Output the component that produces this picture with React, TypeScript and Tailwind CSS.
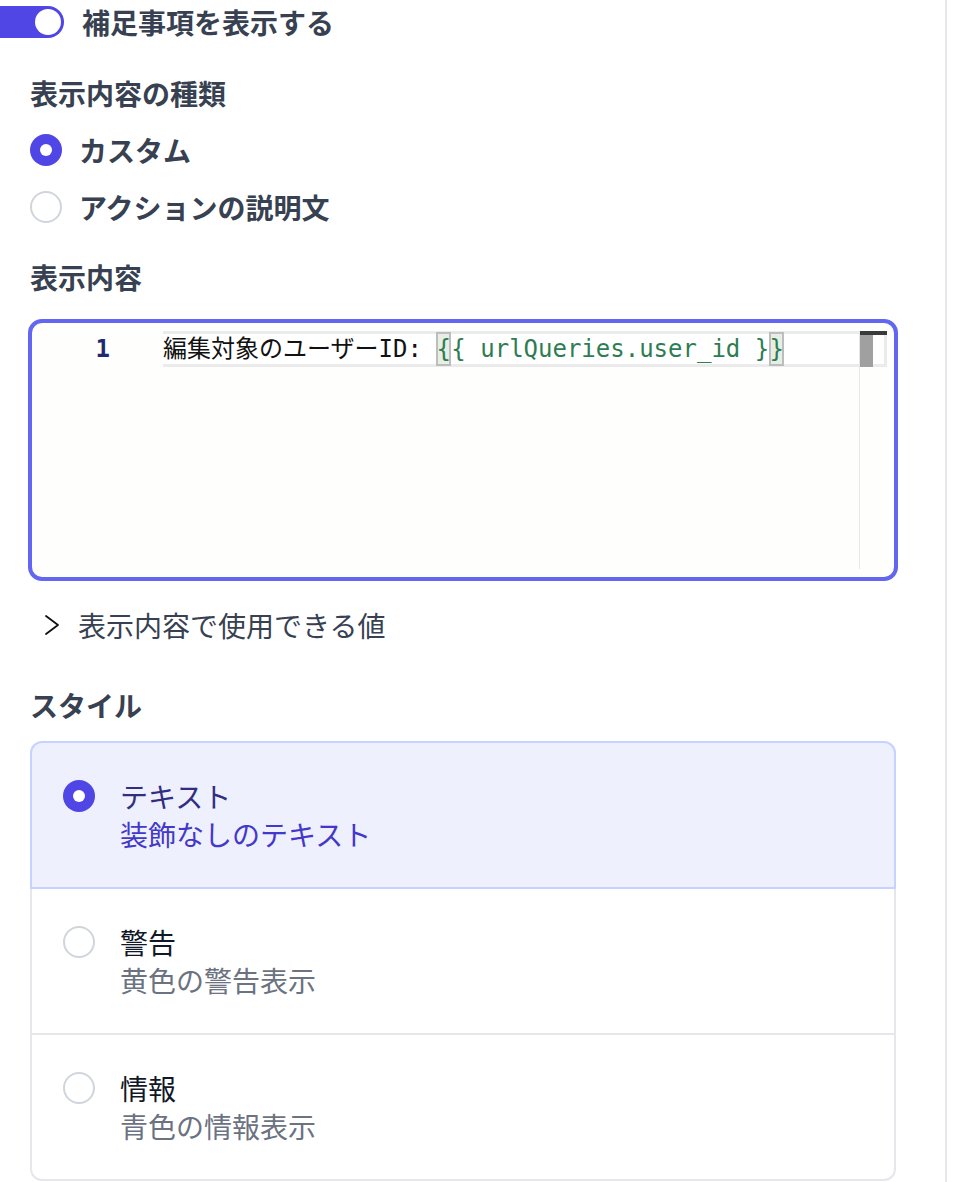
import { useState } from "react";

const styleOptions = [
  { id: "text", label: "テキスト", description: "装飾なしのテキスト" },
  { id: "warning", label: "警告", description: "黄色の警告表示" },
  { id: "info", label: "情報", description: "青色の情報表示" },
];

const contentKinds = [
  { id: "custom", label: "カスタム" },
  { id: "action", label: "アクションの説明文" },
];

function Radio({ checked }: { checked: boolean }) {
  if (checked) {
    return (
      <span className="flex h-[32px] w-[32px] shrink-0 items-center justify-center rounded-full bg-[#4f46e5]">
        <span className="h-[12px] w-[12px] rounded-full bg-white" />
      </span>
    );
  }

  return (
    <span className="h-[32px] w-[32px] shrink-0 rounded-full border-2 border-[#d1d5db] bg-white" />
  );
}

function Editor() {
  return (
    <div className="relative -mx-[2px] mt-[22px] h-[262px] rounded-[14px] border-4 border-[#6366f1] bg-[#fefefc]">
      <div className="flex pt-[8px]">
        <div className="w-[131px] shrink-0 pr-[53px] text-right font-['DejaVu_Sans_Mono',monospace] text-[24px] leading-[36px] font-bold text-[#1f2a6e]">
          1
        </div>
        <div className="mr-[7px] flex h-[36px] flex-1 items-center border-[3px] border-l-0 border-[#ebebeb] bg-white font-['DejaVu_Sans_Mono','Noto_Sans_CJK_JP',monospace] text-[24px] whitespace-pre text-[#111]">
          <span>編集対象のユーザーID: </span>
          <span className="inline-flex h-[34px] w-[15px] items-center justify-center border-2 border-[#bdbdbd] bg-[#e7eee5] text-[#2e7d52]">
            {"{"}
          </span>
          <span className="text-[#2e7d52]">{"{ urlQueries.user_id }"}</span>
          <span className="inline-flex h-[34px] w-[15px] items-center justify-center border-2 border-[#bdbdbd] bg-[#e7eee5] text-[#2e7d52]">
            {"}"}
          </span>
        </div>
      </div>
      {/* scrollbar overlay */}
      <div className="absolute top-[8px] right-[7px] bottom-[8px] w-[28px] border-l border-[#e6e6e6]">
        <div className="h-[4px] w-full bg-[#3a3a3a]" />
        <div className="h-[32px] w-[13px] bg-[#a0a0a0]" />
      </div>
    </div>
  );
}

export default function App() {
  const [enabled, setEnabled] = useState(true);
  const [kind, setKind] = useState("custom");
  const [style, setStyle] = useState("text");

  return (
    <div className="flex min-h-[1182px] w-[953px] bg-white font-['Noto_Sans_CJK_JP','Noto_Sans',sans-serif] text-[#374151]">
      <div className="w-[947px] shrink-0 overflow-hidden border-r-2 border-[#e5e7eb] pt-[6px] pr-[49px] pl-[30px]">
        <div className="flex items-center">
          <button
            type="button"
            onClick={() => setEnabled((v) => !v)}
            className="-ml-[54px] flex h-[32px] w-[88px] items-center justify-end rounded-full bg-[#4f46e5] pr-[3px]"
          >
            <span className="h-[26px] w-[26px] rounded-full bg-white" />
          </button>
          <span className="ml-[18px] text-[28px] leading-[32px] font-bold">
            補足事項を表示する
          </span>
        </div>

        <h3 className="mt-[35px] text-[28px] leading-[40px] font-bold">
          表示内容の種類
        </h3>
        <div className="mt-[17px] flex flex-col gap-[17px]">
          {contentKinds.map((item) => (
            <label
              key={item.id}
              className="flex h-[40px] cursor-pointer items-center gap-[17px]"
              onClick={() => setKind(item.id)}
            >
              <Radio checked={kind === item.id} />
              <span className="text-[28px] leading-[40px] font-bold">
                {item.label}
              </span>
            </label>
          ))}
        </div>

        <h3 className="mt-[30px] text-[28px] leading-[40px] font-bold">
          表示内容
        </h3>
        <Editor />

        <button
          type="button"
          className="mt-[24px] flex h-[40px] items-center text-[28px] leading-[40px]"
        >
          <svg
            width="16"
            height="22"
            viewBox="0 0 16 22"
            className="ml-[14px]"
            fill="none"
            stroke="#111"
            strokeWidth="1.8"
            strokeLinecap="round"
            strokeLinejoin="round"
          >
            <polyline points="2,2 14,11 2,20" />
          </svg>
          <span className="ml-[18px]">表示内容で使用できる値</span>
        </button>

        <h3 className="mt-[40px] text-[28px] leading-[40px] font-bold">
          スタイル
        </h3>
        <div className="mt-[16px] flex flex-col">
          {styleOptions.map((option, index) => {
            const checked = style === option.id;
            return (
              <div
                key={option.id}
                onClick={() => setStyle(option.id)}
                className={
                  "relative flex cursor-pointer items-start border-2 py-[34px] pl-[31px] " +
                  (index > 0 ? "-mt-[2px] " : "") +
                  (index === 0 ? "rounded-t-[12px] " : "") +
                  (index === styleOptions.length - 1 ? "rounded-b-[12px] " : "") +
                  (checked
                    ? "z-10 border-[#c7d2fe] bg-[#eef0fd]"
                    : "border-[#e5e7eb] bg-white")
                }
              >
                <div className="flex h-[38px] items-center">
                  <Radio checked={checked} />
                </div>
                <div className="ml-[25px] flex flex-col text-[28px] leading-[38px]">
                  <span className={checked ? "text-[#312e81]" : "text-[#111827]"}>
                    {option.label}
                  </span>
                  <span className={checked ? "text-[#4338ca]" : "text-[#6b7280]"}>
                    {option.description}
                  </span>
                </div>
              </div>
            );
          })}
        </div>
      </div>
    </div>
  );
}
